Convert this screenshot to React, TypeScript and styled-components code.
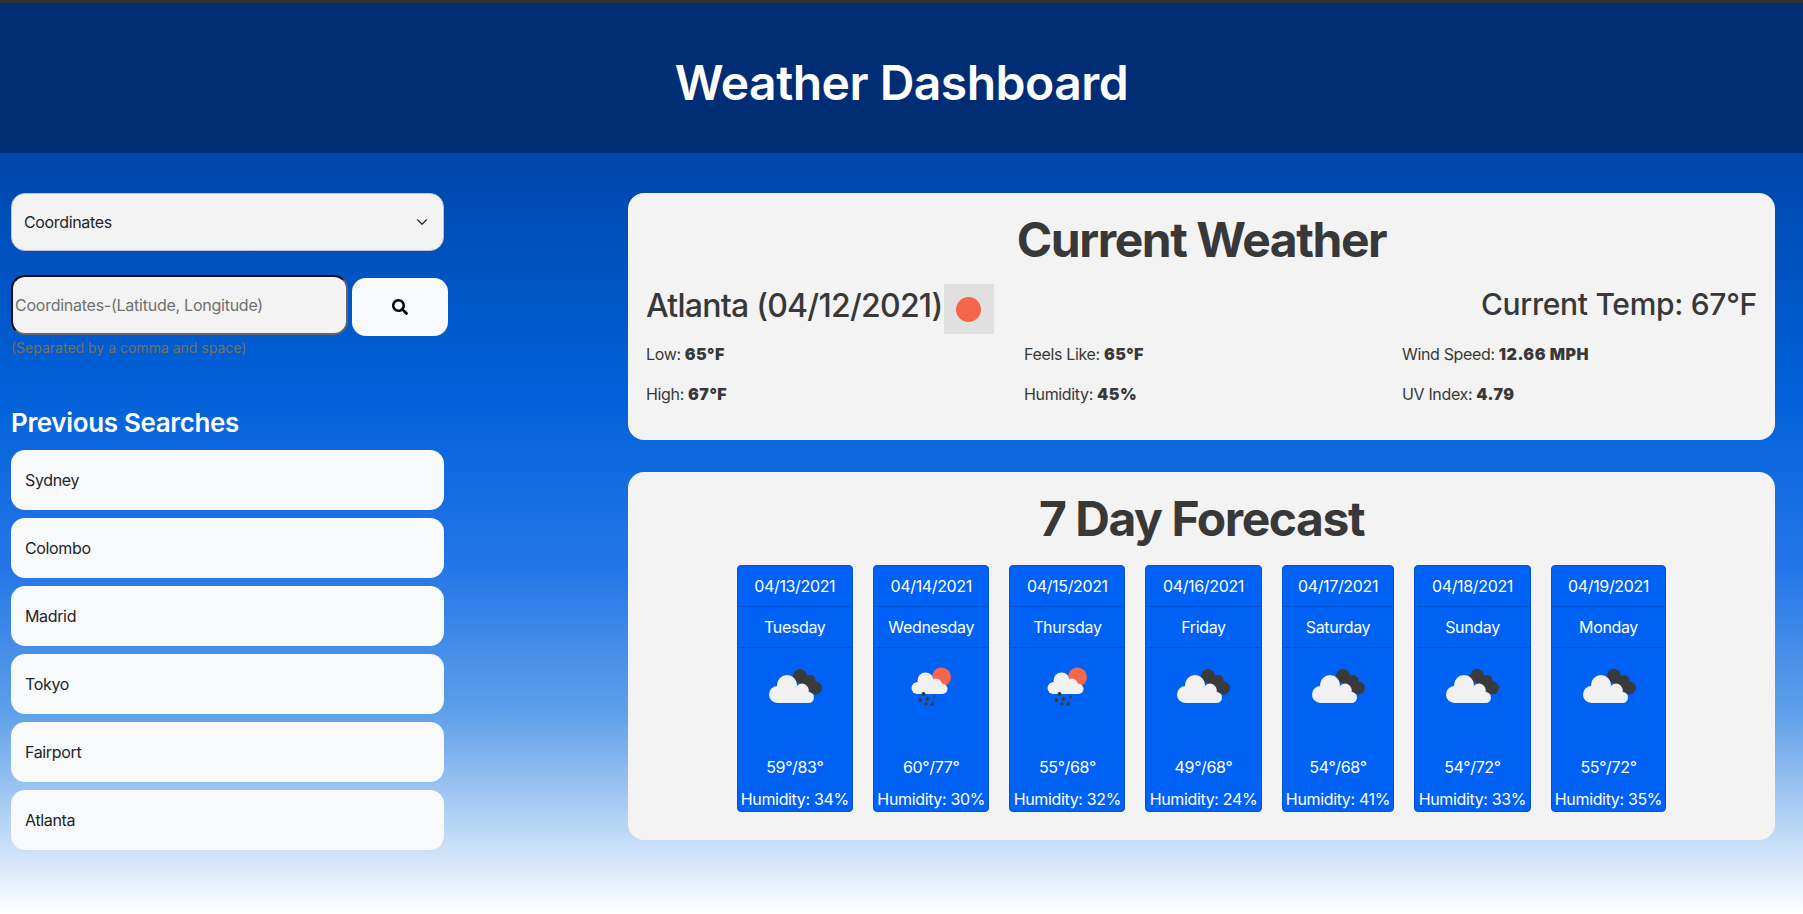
import React from 'react';
import styled, { createGlobalStyle } from 'styled-components';
import { ChevronDown } from 'lucide-react';
import { FaSearch } from 'react-icons/fa';

type Day = {
  date: string;
  name: string;
  icon: 'cloudy' | 'rain';
  temps: string;
  humidity: string;
};

const SEARCHES = ['Sydney', 'Colombo', 'Madrid', 'Tokyo', 'Fairport', 'Atlanta'];

const FORECAST: Day[] = [
  { date: '04/13/2021', name: 'Tuesday', icon: 'cloudy', temps: '59°/83°', humidity: '34%' },
  { date: '04/14/2021', name: 'Wednesday', icon: 'rain', temps: '60°/77°', humidity: '30%' },
  { date: '04/15/2021', name: 'Thursday', icon: 'rain', temps: '55°/68°', humidity: '32%' },
  { date: '04/16/2021', name: 'Friday', icon: 'cloudy', temps: '49°/68°', humidity: '24%' },
  { date: '04/17/2021', name: 'Saturday', icon: 'cloudy', temps: '54°/68°', humidity: '41%' },
  { date: '04/18/2021', name: 'Sunday', icon: 'cloudy', temps: '54°/72°', humidity: '33%' },
  { date: '04/19/2021', name: 'Monday', icon: 'cloudy', temps: '55°/72°', humidity: '35%' },
];

const WeatherIcon: React.FC<{ kind: Day['icon'] }> = ({ kind }) =>
  kind === 'cloudy' ? (
    <svg width="60" height="48" viewBox="0 0 60 48">
      <g fill="#3a3a3c">
        <circle cx="35" cy="15" r="7" />
        <circle cx="45" cy="19.5" r="5.5" />
        <circle cx="50.5" cy="27" r="6.5" />
        <rect x="35" y="16" width="14" height="14" rx="3" />
      </g>
      <g fill="#f1f1f1">
        <circle cx="12.5" cy="33.5" r="8.5" />
        <circle cx="22" cy="24" r="10" />
        <circle cx="37" cy="29" r="6.5" />
        <circle cx="43.5" cy="36.5" r="5.5" />
        <rect x="12.5" y="28" width="31" height="14" />
      </g>
    </svg>
  ) : (
    <svg width="60" height="48" viewBox="0 0 60 48">
      <circle cx="40.5" cy="16" r="9.5" fill="#f4664a" />
      <g fill="#f1f1f1">
        <circle cx="16.5" cy="27" r="6" />
        <circle cx="24.5" cy="19.5" r="8" />
        <circle cx="35" cy="23" r="5.5" />
        <circle cx="41.5" cy="28" r="5" />
        <rect x="16.5" y="22" width="25" height="11" />
      </g>
      <g fill="#3a3a3c">
        <circle cx="22.5" cy="33" r="2" />
        <rect x="18" y="37" width="3" height="4.4" rx="1.4" transform="rotate(20 19.5 39)" />
        <rect x="25" y="35.7" width="3" height="4.4" rx="1.4" transform="rotate(20 26.5 37.7)" />
        <rect x="32.2" y="34.3" width="2.6" height="3" rx="1.2" transform="rotate(20 33.5 35.7)" />
        <rect x="23.6" y="41.3" width="2.8" height="3" rx="1.2" transform="rotate(20 25 42.7)" />
        <rect x="30" y="40.5" width="3" height="4.4" rx="1.4" transform="rotate(20 31.5 42.7)" />
      </g>
    </svg>
  );

const App: React.FC = () => (
  <>
    <GlobalStyle />
    <Page>
      <Header>
        <h1>Weather Dashboard</h1>
      </Header>
      <Main>
        <Sidebar>
          <SelectBox>
            <span>Coordinates</span>
            <ChevronDown size={18} strokeWidth={1.5} />
          </SelectBox>
          <SearchRow>
            <SearchInput placeholder="Coordinates-(Latitude, Longitude)" />
            <SearchButton aria-label="Search">
              <FaSearch size={16} />
            </SearchButton>
          </SearchRow>
          <Hint>(Separated by a comma and space)</Hint>
          <SideTitle>Previous Searches</SideTitle>
          <SearchList>
            {SEARCHES.map((city) => (
              <SearchItem key={city}>{city}</SearchItem>
            ))}
          </SearchList>
        </Sidebar>
        <Content>
          <CurrentCard>
            <CardTitle>Current Weather</CardTitle>
            <CurrentHead>
              <City>
                Atlanta (04/12/2021)
                <SunBox>
                  <SunDot />
                </SunBox>
              </City>
              <CurrentTemp>Current Temp: 67°F</CurrentTemp>
            </CurrentHead>
            <Stats>
              <Stat>Low: <b>65°F</b></Stat>
              <Stat>Feels Like: <b>65°F</b></Stat>
              <Stat>Wind Speed: <b>12.66 MPH</b></Stat>
              <Stat>High: <b>67°F</b></Stat>
              <Stat>Humidity: <b>45%</b></Stat>
              <Stat>UV Index: <b>4.79</b></Stat>
            </Stats>
          </CurrentCard>
          <ForecastCard>
            <CardTitle>7 Day Forecast</CardTitle>
            <DayRow>
              {FORECAST.map((day) => (
                <DayCard key={day.date}>
                  <DayCell>{day.date}</DayCell>
                  <DayCell>{day.name}</DayCell>
                  <DayBody>
                    <IconSlot>
                      <WeatherIcon kind={day.icon} />
                    </IconSlot>
                    <DayTemps>{day.temps}</DayTemps>
                    <DayHumidity>Humidity: {day.humidity}</DayHumidity>
                  </DayBody>
                </DayCard>
              ))}
            </DayRow>
          </ForecastCard>
        </Content>
      </Main>
    </Page>
  </>
);

const GlobalStyle = createGlobalStyle`
  * {
    box-sizing: border-box;
  }

  html,
  body {
    margin: 0;
    height: 914px;
    overflow: hidden;
  }

  body {
    font-family: Inter, 'Liberation Sans', sans-serif;
    font-size: 16px;
    letter-spacing: -0.35px;
    color: #212529;
  }
`;

const Page = styled.div`
  height: 914px;
  border-top: 3px solid #333335;
  background: linear-gradient(to bottom, #003a9e 0%, #0047ab 17%, #0060d8 42%, #2476e8 62%, #5fa0ea 78%, #ffffff 100%);
`;

const Header = styled.header`
  height: 150px;
  padding-top: 10px;
  background: #002d74;
  display: flex;
  align-items: center;
  justify-content: center;

  h1 {
    margin: 0;
    color: #fff;
    font-size: 48px;
    font-weight: 600;
    letter-spacing: -0.5px;
    line-height: 1.2;
  }
`;

const Main = styled.main`
  display: flex;
  padding: 40px 28px 0 11px;
`;

const Sidebar = styled.aside`
  width: 617px;
  flex: none;
`;

const SelectBox = styled.div`
  width: 433px;
  height: 58px;
  padding: 0 12px;
  display: flex;
  align-items: center;
  justify-content: space-between;
  background: #f3f3f3;
  border: 1px solid #b9c3d6;
  border-radius: 14px;
`;

const SearchRow = styled.div`
  display: flex;
  align-items: flex-end;
  gap: 4px;
  margin-top: 24px;
`;

const SearchInput = styled.input`
  width: 337px;
  height: 60px;
  padding: 0 2px;
  font: inherit;
  letter-spacing: -0.25px;
  background: #f3f3f3;
  border: 2px solid;
  border-color: #111 #666 #666 #111;
  border-radius: 14px;
  outline: none;

  &::placeholder {
    color: #707070;
    opacity: 1;
  }
`;

const SearchButton = styled.button`
  width: 96px;
  height: 58px;
  margin-bottom: -1px;
  display: flex;
  align-items: center;
  justify-content: center;
  color: #000;
  background: #f8f9fa;
  border: none;
  border-radius: 14px;
`;

const Hint = styled.div`
  margin-top: 3px;
  font-size: 14px;
  letter-spacing: 0;
  line-height: 20px;
  color: #77705f;
`;

const SideTitle = styled.h2`
  margin: 48px 0 0;
  font-size: 26px;
  font-weight: 600;
  letter-spacing: -0.35px;
  line-height: 34px;
  color: #fff;
`;

const SearchList = styled.div`
  margin-top: 10px;
  display: flex;
  flex-direction: column;
  gap: 8px;
`;

const SearchItem = styled.div`
  width: 433px;
  height: 60px;
  padding: 0 14px;
  display: flex;
  align-items: center;
  background: #f8f9fa;
  border-radius: 14px;
`;

const Content = styled.section`
  flex: 1;
  min-width: 0;
  display: flex;
  flex-direction: column;
  gap: 32px;
`;

const Card = styled.div`
  background: #f3f3f3;
  border-radius: 16px;
  color: #383838;
`;

const CurrentCard = styled(Card)`
  height: 247px;
  padding: 18px 18px 0;
`;

const ForecastCard = styled(Card)`
  height: 368px;
  padding: 18px 18px 0;
`;

const CardTitle = styled.h2`
  margin: 0;
  text-align: center;
  font-size: 48px;
  font-weight: 700;
  letter-spacing: -1.45px;
  line-height: 58px;
`;

const CurrentHead = styled.div`
  margin-top: 15px;
  display: flex;
  align-items: flex-start;
  justify-content: space-between;
`;

const City = styled.div`
  display: flex;
  align-items: flex-start;
  gap: 1px;
  font-size: 32px;
  font-weight: 500;
  letter-spacing: -0.75px;
  line-height: 44px;
`;

const SunBox = styled.span`
  width: 50px;
  height: 50px;
  display: flex;
  align-items: center;
  justify-content: center;
  background: #e0e0e0;
`;

const SunDot = styled.span`
  width: 25px;
  height: 25px;
  border-radius: 50%;
  background: #f4664a;
`;

const CurrentTemp = styled.div`
  font-size: 30px;
  font-weight: 500;
  letter-spacing: -0.3px;
  line-height: 40px;
`;

const Stats = styled.div`
  margin-top: 8px;
  display: grid;
  grid-template-columns: repeat(3, 378px);
  row-gap: 16px;
`;

const Stat = styled.div`
  line-height: 24px;

  b {
    font-weight: 900;
    letter-spacing: 0.5px;
  }
`;

const DayRow = styled.div`
  margin-top: 17px;
  display: flex;
  justify-content: center;
  gap: 20px;
`;

const DayCard = styled.div`
  height: 247px;
  display: flex;
  flex-direction: column;
  color: #fff;
  background: #0062f5;
  border: 1px solid #0054d2;
  border-radius: 4px;
`;

const DayCell = styled.div`
  height: 41px;
  flex: none;
  display: flex;
  align-items: center;
  justify-content: center;
  border-bottom: 1px solid #0054d2;
`;

const DayBody = styled.div`
  flex: 1;
  padding: 0 3.3px;
  display: flex;
  flex-direction: column;
  align-items: center;
`;

const IconSlot = styled.div`
  margin-top: 13px;
  height: 94px;

  svg {
    filter: blur(0.4px);
  }
`;

const DayTemps = styled.div`
  line-height: 24px;
`;

const DayHumidity = styled.div`
  margin-top: 8px;
  line-height: 24px;
`;

export default App;
